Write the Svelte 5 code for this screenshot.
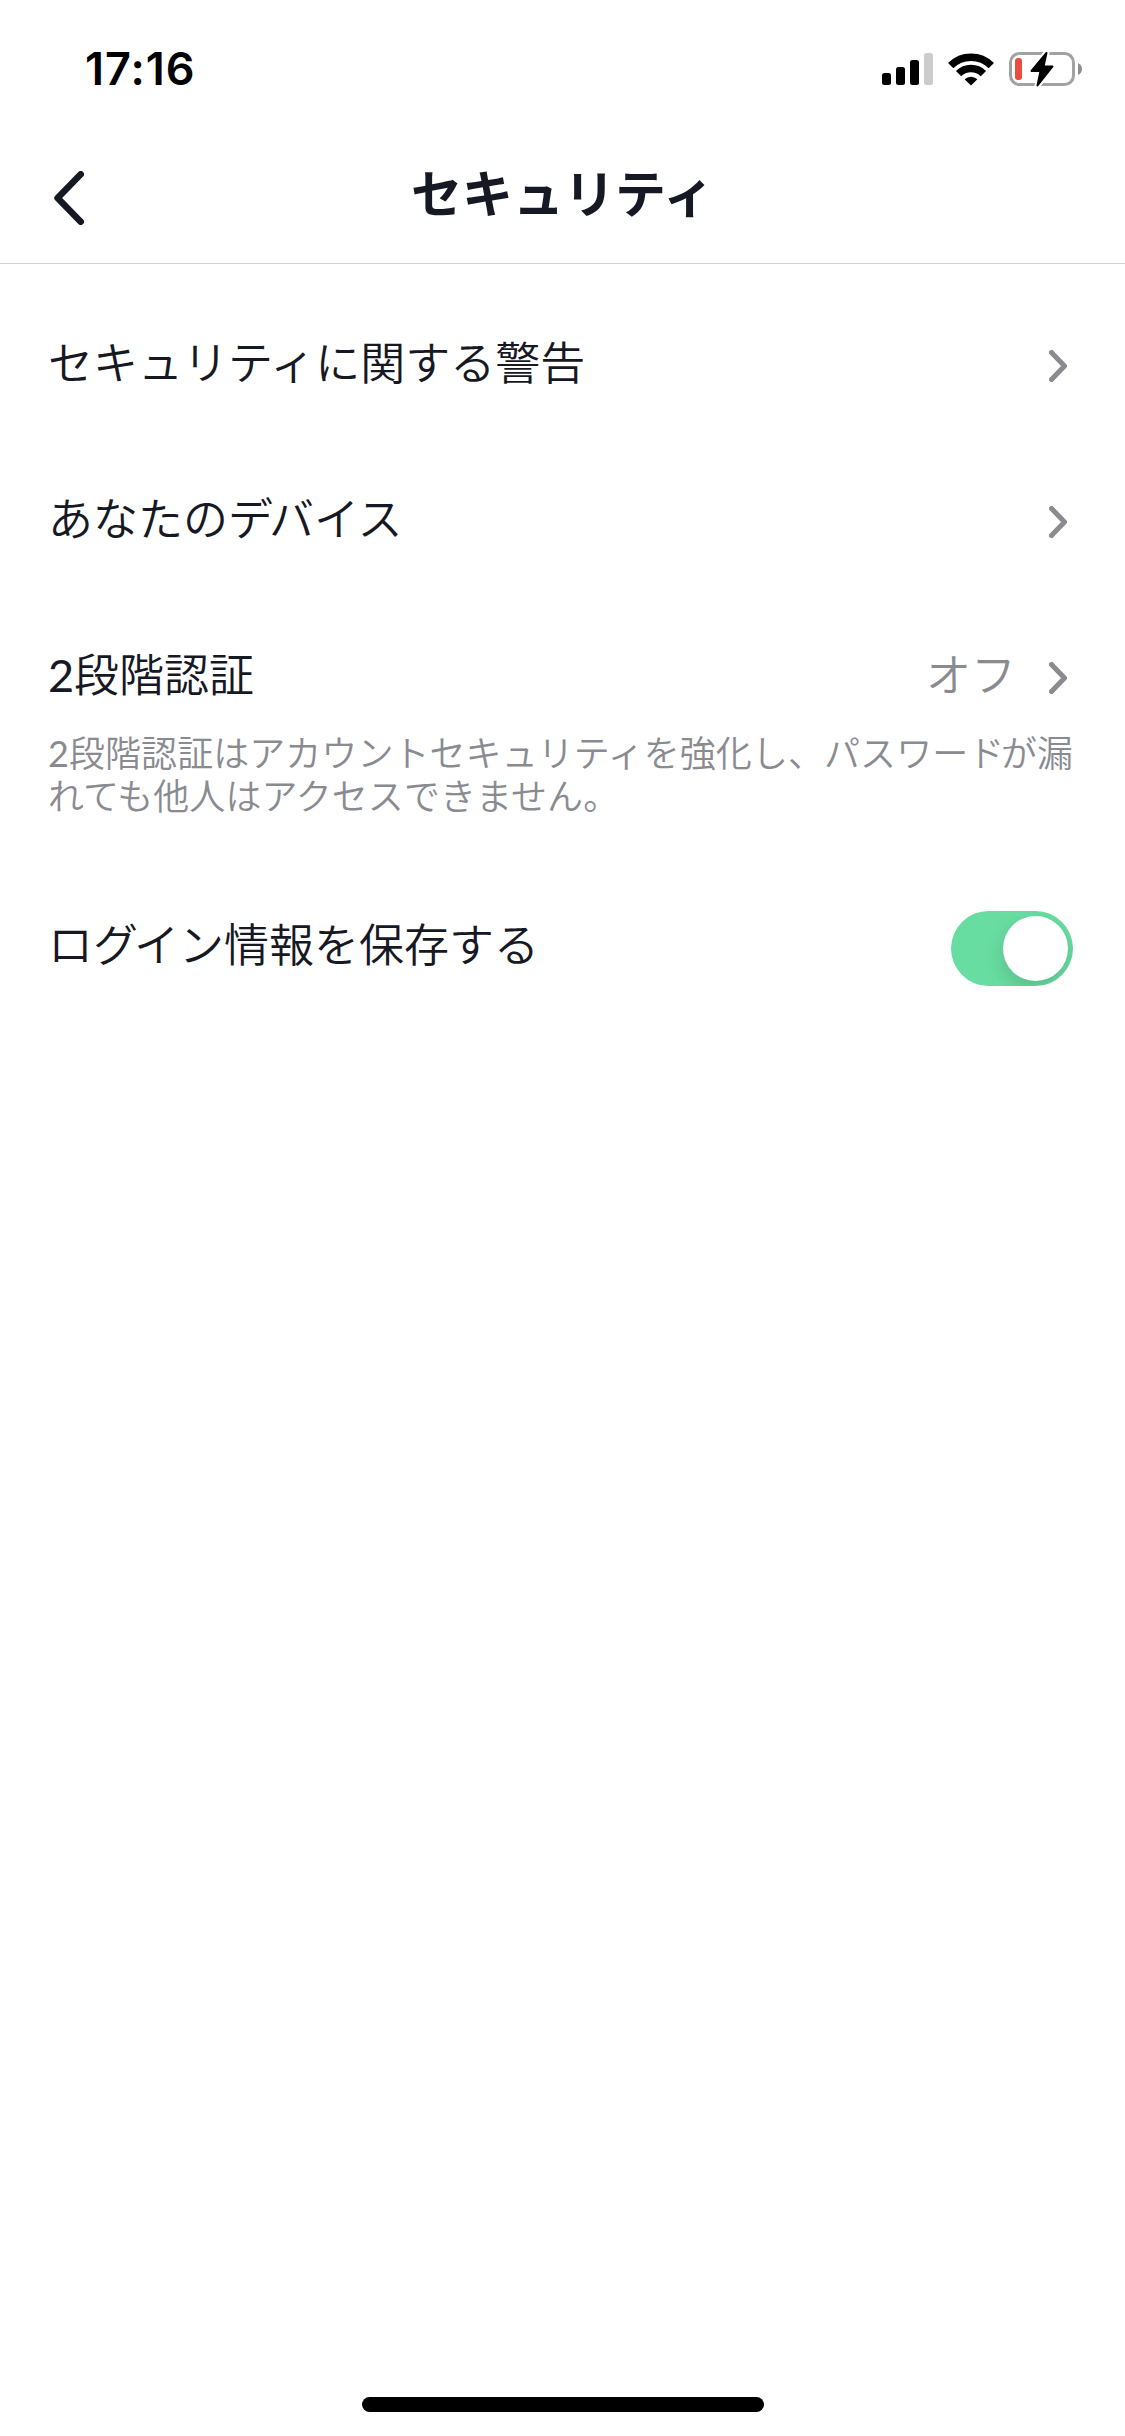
<script lang="ts">
  let saveLogin = $state(true);

  const rows = [
    { label: "セキュリティに関する警告", value: "", note: [] },
    { label: "あなたのデバイス", value: "", note: [] },
    {
      label: "2段階認証",
      value: "オフ",
      note: [
        "2段階認証はアカウントセキュリティを強化し、パスワードが漏",
        "れても他人はアクセスできません。",
      ],
    },
  ];

  // digits get a regular weight, voiced kana are pulled towards the next one
  function pieces(text: string) {
    return text
      .split(/(\d+|デ(?=バ)|グ(?=イ)|ド(?=が))/)
      .filter(Boolean)
      .map((t) => ({
        t,
        kind: /^\d+$/.test(t) ? "digit" : /^[デグド]$/.test(t) ? "kern" : "",
      }));
  }
</script>

{#snippet run(text: string)}
  {#each pieces(text) as p}<span class={p.kind}>{p.t}</span>{/each}
{/snippet}

<div class="screen">
  <div class="status-bar">
    <span class="time">17:16</span>
    <div class="indicators">
      <svg class="signal" viewBox="0 0 51 32">
        <rect x="0" y="20" width="9" height="12" rx="2.5" />
        <rect x="14" y="14" width="9" height="18" rx="2.5" />
        <rect x="28" y="7" width="9" height="25" rx="2.5" />
        <rect class="off" x="42" y="0" width="9" height="32" rx="2.5" />
      </svg>
      <svg class="wifi" viewBox="0 0 46 33">
        <path d="M2.7 12.7A28.7 28.7 0 0 1 43.3 12.7" />
        <path d="M10.6 20.6A17.5 17.5 0 0 1 35.4 20.6" />
        <path class="tip" d="M16.6 26.2A9.4 9.4 0 0 1 29.4 26.2L23 32.6Z" />
      </svg>
      <svg class="battery" viewBox="0 0 74 36">
        <rect class="case" x="1.5" y="2.5" width="63" height="31" rx="9" />
        <path class="cap" d="M69 12Q73 14 73 18T69 24Z" />
        <rect class="level" x="6" y="7" width="7" height="22" rx="3" />
        <path class="bolt-gap" d="M37.5 2L22.5 20H31.5L28.5 34.5L43.5 15.5H34.5Z" />
        <path class="bolt" d="M37.5 2L22.5 20H31.5L28.5 34.5L43.5 15.5H34.5Z" />
      </svg>
    </div>
  </div>

  <header>
    <button class="back" aria-label="戻る">
      <svg viewBox="0 0 30 54"><path d="M26.7 3.3L3.6 27L26.7 50.7" /></svg>
    </button>
    <h1>セキュリティ</h1>
  </header>

  <main>
    {#each rows as row}
      <div class="row">
        <span class="label">{@render run(row.label)}</span>
        {#if row.value}
          <span class="value">{row.value}</span>
        {/if}
        <svg class="chevron" viewBox="0 0 18 32">
          <path d="M2.5 2.5L15.5 16L2.5 29.5" />
        </svg>
      </div>
      {#if row.note.length > 0}
        <div class="note">
          {#each row.note as line}
            <div>{@render run(line)}</div>
          {/each}
        </div>
      {/if}
    {/each}
    <div class="row toggle-row">
      <span class="label">{@render run("ログイン情報を保存する")}</span>
      <button
        class="toggle"
        class:on={saveLogin}
        role="switch"
        aria-checked={saveLogin}
        aria-label="ログイン情報を保存する"
        onclick={() => (saveLogin = !saveLogin)}
      >
        <span class="knob"></span>
      </button>
    </div>
  </main>

  <div class="home-bar"></div>
</div>

<style>
  :global(body) {
    background: #fff;
  }
  .screen {
    display: flex;
    flex-direction: column;
    width: 1125px;
    height: 2436px;
    box-sizing: border-box;
    background: #fff;
    color: #161823;
    font-family: Lato, "Noto Sans CJK JP", sans-serif;
    overflow: hidden;
  }
  .status-bar {
    display: flex;
    justify-content: space-between;
    align-items: center;
    height: 138px;
    padding: 0 42px 0 85px;
    box-sizing: border-box;
    color: #000;
  }
  .time {
    font-family: Inter, sans-serif;
    font-size: 45px;
    font-weight: 600;
    line-height: 54px;
    letter-spacing: 1px;
  }
  .indicators {
    display: flex;
    align-items: center;
    gap: 15px;
  }
  .signal {
    width: 51px;
    height: 32px;
  }
  .signal .off {
    fill: #ccc;
  }
  .wifi {
    width: 46px;
    height: 33px;
  }
  .wifi path {
    fill: none;
    stroke: #000;
    stroke-width: 7.4;
  }
  .wifi .tip {
    fill: #000;
    stroke: none;
  }
  .battery {
    width: 74px;
    height: 36px;
  }
  .case {
    fill: none;
    stroke: #a2a2a2;
    stroke-width: 3;
  }
  .cap {
    fill: #8e8e8e;
  }
  .level {
    fill: #eb4e3d;
  }
  .bolt,
  .bolt-gap {
    stroke: #000;
    stroke-width: 2;
    stroke-linejoin: round;
  }
  .bolt-gap {
    stroke: #fff;
    stroke-width: 6;
  }
  header {
    display: grid;
    grid-template-columns: 120px 1fr 120px;
    align-items: center;
    height: 126px;
    box-sizing: border-box;
    border-bottom: 1px solid #d0d1d3;
  }
  button {
    padding: 0;
    border: none;
    background: none;
    cursor: pointer;
  }
  .back {
    height: 54px;
    margin: 0 36px 6px 54px;
  }
  .back svg {
    display: block;
    width: 30px;
    height: 54px;
  }
  .back path {
    fill: none;
    stroke: #161823;
    stroke-width: 6.6;
    stroke-linecap: round;
    stroke-linejoin: round;
  }
  h1 {
    margin: 0 0 13px;
    font-size: 51px;
    font-weight: 700;
    line-height: 60px;
    text-align: center;
  }
  main {
    flex: 1;
    padding: 24px 52px 0 48px;
  }
  .row {
    display: flex;
    align-items: center;
    height: 156px;
  }
  .label {
    flex: 1;
    font-size: 45px;
    font-weight: 350;
    line-height: 54px;
    padding-bottom: 6px;
  }
  .value {
    margin-right: 33px;
    color: #8a8b91;
    font-size: 45px;
    font-weight: 350;
    line-height: 54px;
    padding-bottom: 6px;
  }
  .digit {
    font-weight: 400;
  }
  .kern {
    letter-spacing: -0.09em;
  }
  .chevron {
    width: 18px;
    height: 32px;
    margin-right: 6px;
  }
  .chevron path {
    fill: none;
    stroke: #8a8b91;
    stroke-width: 5;
    stroke-linecap: round;
    stroke-linejoin: round;
  }
  .note {
    margin: -24px -10px 0 0;
    color: #8a8b91;
    font-size: 36px;
    font-weight: 350;
    line-height: 43px;
    letter-spacing: 0.06px;
    white-space: nowrap;
  }
  .toggle-row {
    margin-top: 52px;
  }
  .toggle {
    display: flex;
    align-items: center;
    width: 122px;
    height: 75px;
    padding: 0 5px;
    border-radius: 37.5px;
    background: #d0d1d3;
    overflow: hidden;
  }
  .toggle.on {
    justify-content: flex-end;
    background: #68dda2;
  }
  .knob {
    width: 65px;
    height: 65px;
    border-radius: 50%;
    background: #fff;
    box-shadow: 0 8px 20px rgba(0, 0, 0, 0.15);
  }
  .home-bar {
    width: 402px;
    height: 15px;
    margin: 0 auto 24px;
    border-radius: 7.5px;
    background: #000;
  }
</style>
